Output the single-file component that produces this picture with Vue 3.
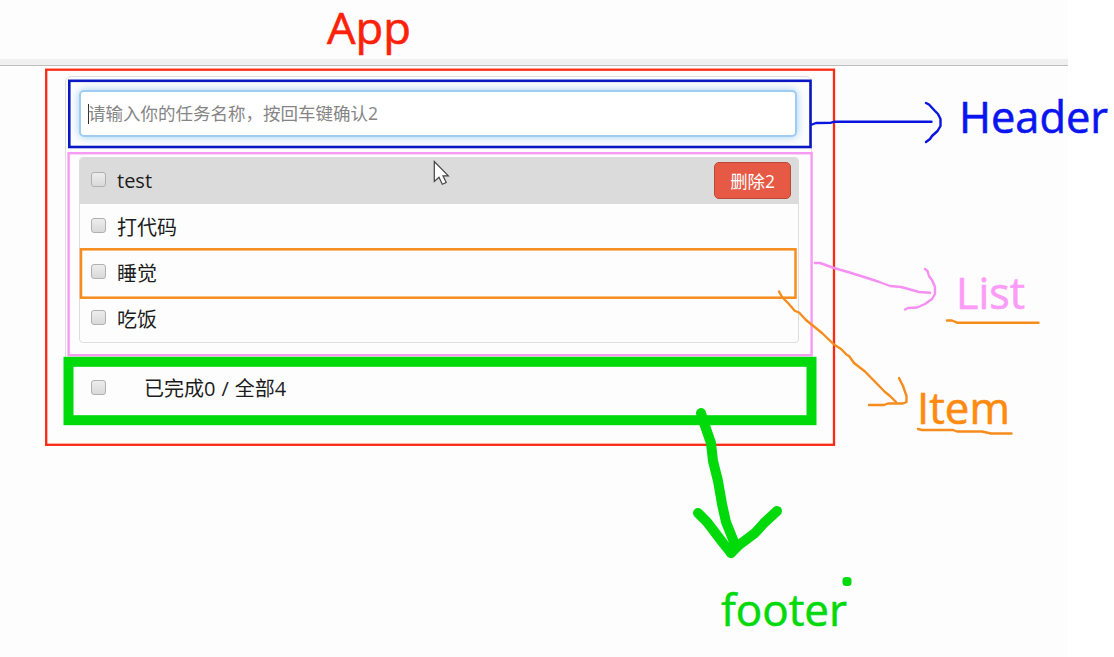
<script setup>
import { ref } from 'vue'

const todos = ref([
  { id: 1, name: 'test', done: false, active: true },
  { id: 2, name: '打代码', done: false, active: false },
  { id: 3, name: '睡觉', done: false, active: false },
  { id: 4, name: '吃饭', done: false, active: false },
])
</script>

<template>
  <div class="page">
    <div class="toolbar-edge"></div>

    <main class="card">
      <header class="entry">
        <i class="caret"></i>
        <span class="hint">请输入你的任务名称，按回车键确认2</span>
      </header>

      <ul class="list">
        <li v-for="t in todos" :key="t.id" class="item" :class="{ active: t.active }">
          <span class="box"></span>
          <span class="name">{{ t.name }}</span>
          <button v-if="t.active" class="remove">删除2</button>
        </li>
      </ul>

      <footer class="summary">
        <span class="box"></span>
        <span class="count">已完成0 / 全部{{ todos.length }}</span>
      </footer>
    </main>

    <!-- Hand-drawn component outlines laid over the page -->
    <svg class="notes" width="1114" height="657" viewBox="0 0 1114 657">
      <g fill="none" stroke-linejoin="miter">
        <rect x="46.2" y="69.7" width="787.8" height="375.1" stroke="#fa2a14" stroke-width="2.3" />
        <rect x="69.3" y="80.8" width="741.2" height="66.2" stroke="#0a18c4" stroke-width="2.6" />
        <rect x="68.6" y="153.2" width="743" height="202" stroke="#f79af3" stroke-width="2.4" />
        <rect x="81" y="249.3" width="714.5" height="48.4" stroke="#f68c1c" stroke-width="2.5" />
        <rect x="68.5" y="361.8" width="743" height="58.4" stroke="#00d90a" stroke-width="10" />
      </g>

      <g fill="none" stroke-linecap="round" stroke-linejoin="round">
        <g stroke="#0a14e0" stroke-width="2.4">
          <path d="M812 124.5L816 123L831 122.7L834 121.8H931.5" />
          <path d="M926 103L929 104.5L935 111L938 114L940.5 119V126L937.5 131L932 136L930 139L926 142" />
        </g>
        <g stroke="#f58ff2" stroke-width="2.4">
          <path d="M815 263H820L834 268L848 272L864 277L878 281.5L890 286L901 287L912 290L919 292L930 292.8" />
          <path d="M925 269L927.5 271L929 276L932.5 281L935 287V294L932 299L925 304L917 307.5L908 308L905 309.5" />
        </g>
        <g stroke="#f68c1c" stroke-width="2.4">
          <path d="M779 291.5L782 297L788 303L795 311L799 312.5L806 320L822 333L834 344.5L841 349L847 355L849 356L854 363L865 371.5L885 392L890 396L896 402" />
          <path d="M899 378L903 386L906.5 396L906.5 402L903 403.5L888 403.5L884 405H869" />
          <path d="M947 320.5H952L957 322.7H1038.5" />
          <path d="M918 429L922 430H953L957 431.5H982L991 433.5H1011.5" />
        </g>
        <g stroke="#00d90a" stroke-width="10">
          <path d="M701 413L704 423L711 443L713 461L718 481L722 504L726 522L734 542L731 553" />
          <path d="M698 513L707 522L723 543L731 553L739 545L755 533L764 523L777 511" />
        </g>
      </g>
      <rect x="842.5" y="577" width="9" height="9" rx="3.5" fill="#00d90a" />

      <g class="labels">
        <text x="327" y="43.5" textLength="84" lengthAdjust="spacingAndGlyphs" fill="#fc2108" stroke="#fc2108">App</text>
        <text x="959" y="133.3" textLength="149" lengthAdjust="spacingAndGlyphs" fill="#0a14f0" stroke="#0a14f0">Header</text>
        <text x="956" y="309.3" textLength="69" lengthAdjust="spacingAndGlyphs" fill="#fc9bf8" stroke="#fc9bf8">List</text>
        <text x="917" y="423.8" textLength="93" lengthAdjust="spacingAndGlyphs" fill="#ff8a10" stroke="#ff8a10">Item</text>
        <text x="721" y="625.8" textLength="126" lengthAdjust="spacingAndGlyphs" fill="#00d90a" stroke="#00d90a">footer</text>
      </g>

      <path d="M434.3 161.5V181.5L439 177.2L442.3 184.3L446.2 182.5L443 175.8H448.3Z" fill="#fff" stroke="#444" stroke-width="1.2" />
    </svg>
  </div>
</template>

<style>
body {
  margin: 0;
  background: #fff;
}
</style>

<style scoped>
.page {
  position: relative;
  box-sizing: border-box;
  width: 1114px;
  height: 657px;
  padding-top: 59px;
  overflow: hidden;
  background: linear-gradient(to right, #fdfdfd 1068px, #fff 1068px);
  color: #1c1c1c;
  font-family: "Open Sans", "Noto Sans CJK SC", sans-serif;
  font-size: 20px;
}

.toolbar-edge {
  box-sizing: border-box;
  width: 1068px;
  height: 7px;
  background: #f0f0f0;
  border-bottom: 1.5px solid #bdbdbd;
}

.card {
  box-sizing: border-box;
  width: 747px;
  height: 346px;
  margin: 10px 0 0 65px;
  padding: 13px 12px 0 13px;
  border: 1px solid #ddd;
  border-radius: 6px;
}

.entry {
  display: flex;
  align-items: center;
  box-sizing: border-box;
  width: 718px;
  height: 47px;
  padding-left: 8px;
  border: 2px solid #9fcdf2;
  border-radius: 5px;
  background: #fff;
  box-shadow: 0 0 9px rgba(82, 168, 236, 0.55);
}

.caret {
  width: 1px;
  height: 20px;
  margin-left: -1px;
  background: #333;
}

.hint {
  margin: 0 0 2px -1px;
  color: #858585;
  font-size: 17.5px;
  line-height: 24px;
  white-space: nowrap;
}

.list {
  box-sizing: border-box;
  width: 720px;
  height: 186px;
  margin: 20px 0 0;
  padding: 0;
  border: 1px solid #ddd;
  border-radius: 4px;
  overflow: hidden;
  list-style: none;
}

.item {
  display: flex;
  align-items: center;
  box-sizing: border-box;
  height: 46.1px;
  padding: 0 7px 0 11px;
}

.item.active {
  background: #dbdbdb;
}

.box {
  box-sizing: border-box;
  flex: none;
  width: 15px;
  height: 15px;
  margin-bottom: 3px;
  border: 1px solid #b0b0b0;
  border-radius: 3px;
  background: linear-gradient(#ededed, #d9d9d9);
}

.name {
  flex: 1;
  margin: 2px 0 0 11px;
  line-height: 28px;
}

.item.active .name {
  margin-top: 0;
}

.remove {
  box-sizing: border-box;
  width: 77px;
  height: 37px;
  margin: 0 0 1px;
  padding: 0;
  border: 1px solid #b94a3a;
  border-radius: 5px;
  background: #e65a45;
  color: #fff;
  font: 17.4px/24px "Open Sans", "Noto Sans CJK SC", sans-serif;
}

.summary {
  display: flex;
  align-items: center;
  height: 48px;
  margin-top: 22px;
  padding-left: 12px;
}

.summary .box {
  margin-bottom: 3px;
}

.count {
  margin-left: 38px;
  line-height: 28px;
  white-space: nowrap;
  word-spacing: 0.8px;
}

.notes {
  position: absolute;
  top: 0;
  left: 0;
}

.labels {
  font-family: "Open Sans", "Noto Sans", sans-serif;
  font-size: 44px;
  stroke-width: 0.6px;
}
</style>
